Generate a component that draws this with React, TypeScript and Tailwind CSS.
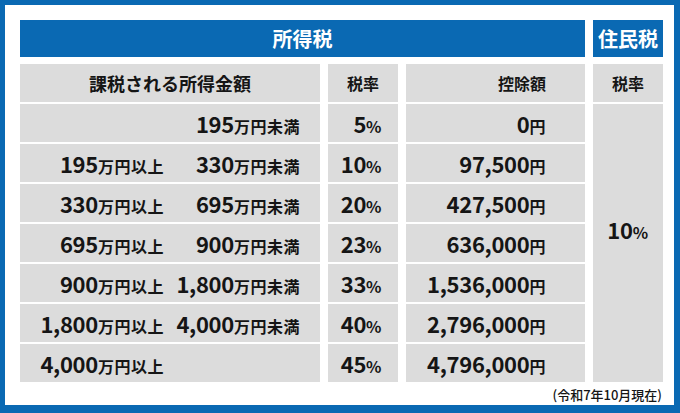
import React from 'react';

const FONT = { fontFamily: "'Noto Sans CJK JP', 'Noto Sans', sans-serif" };

type Row = [string | null, string | null, string, string];

const rows: Row[] = [
  [null, '195', '5', '0'],
  ['195', '330', '10', '97,500'],
  ['330', '695', '20', '427,500'],
  ['695', '900', '23', '636,000'],
  ['900', '1,800', '33', '1,536,000'],
  ['1,800', '4,000', '40', '2,796,000'],
  ['4,000', null, '45', '4,796,000'],
];

function Amount({ n, unit }: { n: string; unit: string }) {
  return (
    <span className="inline-flex items-baseline whitespace-nowrap">
      <span className="text-[22px] leading-none font-bold tracking-[-0.3px]">{n}</span>
      <span className="text-[16px] leading-none font-bold tracking-[0.5px]">{unit}</span>
    </span>
  );
}

export default function App() {
  return (
    <div
      className="w-[680px] h-[413px] bg-[#0a69b3] pt-[5px] pl-[5px] pr-[6px] pb-[8px] text-[#151515]"
      style={FONT}
    >
      <div className="w-full h-full bg-white pl-[15px] pt-[15px] pr-[11px] flex flex-col">
        <div className="grid grid-cols-[300px_70px_179px_70px] gap-x-2 gap-y-[2px] grid-rows-[42px_38px_repeat(7,38px)]">
          <div className="col-span-3 bg-[#0a69b3] text-white text-[20px] font-bold flex items-center justify-center mb-[5px]">
            所得税
          </div>
          <div className="bg-[#0a69b3] text-white text-[20px] font-bold flex items-center justify-center mb-[5px]">
            住民税
          </div>

          <div className="bg-[#dcdcdc] flex items-center justify-center text-[18px] font-bold">
            課税される所得金額
          </div>
          <div className="bg-[#dcdcdc] flex items-center justify-center text-[16px] font-bold">
            税率
          </div>
          <div className="bg-[#dcdcdc] flex items-center justify-end pr-[39px] text-[16px] font-bold">
            控除額
          </div>
          <div className="bg-[#dcdcdc] flex items-center justify-center text-[16px] font-bold">
            税率
          </div>

          {rows.map((r, i) => (
            <React.Fragment key={i}>
              <div className="bg-[#dcdcdc] flex items-center" style={{ gridColumn: 1, gridRow: i + 3 }}>
                <div className="w-[144px] flex justify-end">
                  {r[0] && <Amount n={r[0]} unit="万円以上" />}
                </div>
                <div className="flex-1 flex justify-end pr-[20px]">
                  {r[1] && <Amount n={r[1]} unit="万円未満" />}
                </div>
              </div>
              <div className="bg-[#dcdcdc] flex items-center justify-end pr-[16px]" style={{ gridColumn: 2, gridRow: i + 3 }}>
                <Amount n={r[2]} unit="%" />
              </div>
              <div className="bg-[#dcdcdc] flex items-center justify-end pr-[39px]" style={{ gridColumn: 3, gridRow: i + 3 }}>
                <Amount n={r[3]} unit="円" />
              </div>
            </React.Fragment>
          ))}

          <div className="bg-[#dcdcdc] col-start-4 row-start-3 row-span-7 flex items-center justify-center pb-[28px]">
            <Amount n="10" unit="%" />
          </div>
        </div>
        <div className="flex justify-end pr-[1px] mt-[4px] text-[13px] font-medium leading-[18px]">
          (令和7年10月現在)
        </div>
      </div>
    </div>
  );
}
